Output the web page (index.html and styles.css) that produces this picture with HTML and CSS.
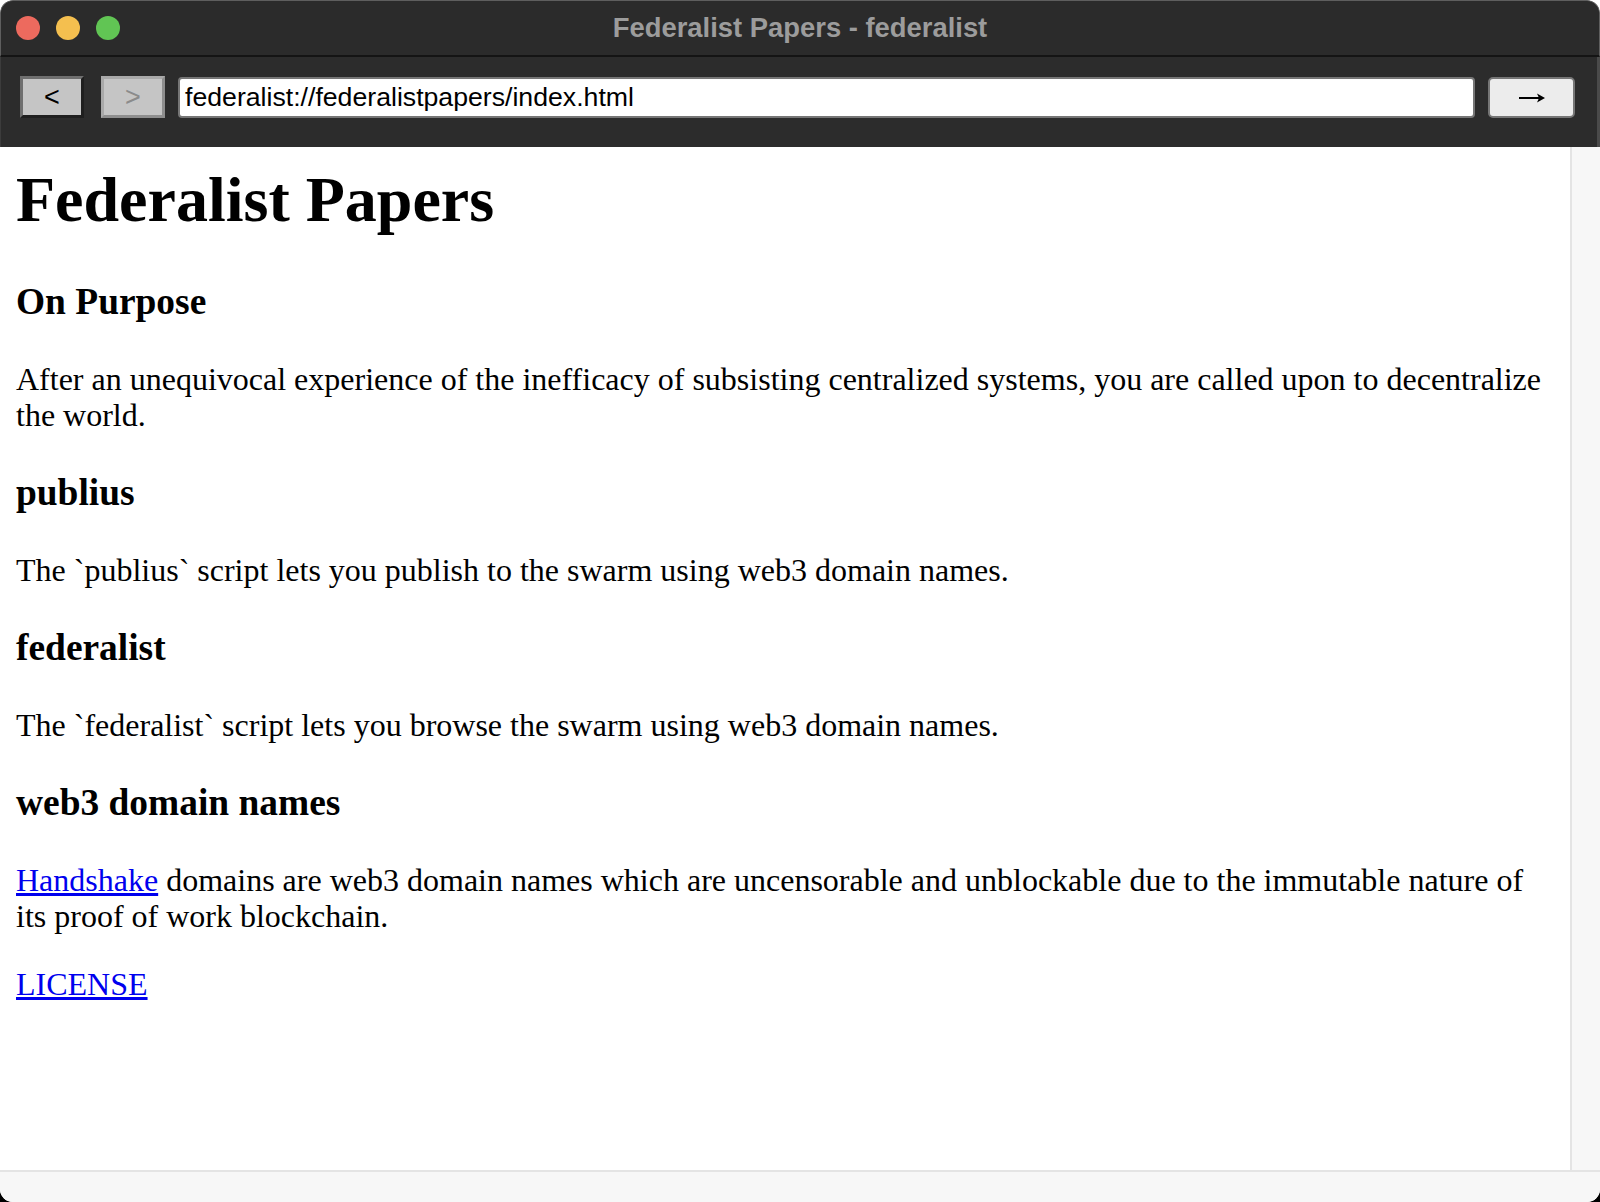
FILE: index.html
```html
<!DOCTYPE html>
<html lang="en">
<head>
<meta charset="utf-8">
<title>Federalist Papers - federalist</title>
<link rel="stylesheet" href="styles.css">
</head>
<body>
<div class="window">
  <div class="titlebar">
    <div class="lights">
      <span class="light red"></span>
      <span class="light yellow"></span>
      <span class="light green"></span>
    </div>
    <div class="title">Federalist Papers - federalist</div>
  </div>
  <div class="toolbar">
    <button class="nav back">&lt;</button>
    <button class="nav fwd" disabled>&gt;</button>
    <div class="url">federalist://federalistpapers/index.html</div>
    <button class="go" aria-label="&rarr;"><svg class="arrow" width="28" height="12" viewBox="0 0 28 12"><path d="M1 6H22" stroke="#000" stroke-width="2" fill="none"/><path d="M19 1.5 L27 6 L19 10.5 L21 6 Z" fill="#000"/></svg></button>
  </div>
  <div class="viewport">
    <div class="page">
      <h1>Federalist Papers</h1>
      <h3>On Purpose</h3>
      <p>After an unequivocal experience of the inefficacy of subsisting centralized systems, you are called upon to decentralize the world.</p>
      <h3>publius</h3>
      <p>The `publius` script lets you publish to the swarm using web3 domain names.</p>
      <h3>federalist</h3>
      <p>The `federalist` script lets you browse the swarm using web3 domain names.</p>
      <h3>web3 domain names</h3>
      <p><a href="#">Handshake</a> domains are web3 domain names which are uncensorable and unblockable due to the immutable nature of its proof of work blockchain.</p>
      <p><a href="#">LICENSE</a></p>
    </div>
    <div class="vscroll"></div>
  </div>
  <div class="hscroll"></div>
</div>
</body>
</html>
```

FILE: styles.css
```css
html {
  background: linear-gradient(#ffffff 0 50%, #000000 50% 100%);
}
body {
  margin: 0;
  width: 1600px;
  height: 1202px;
  overflow: hidden;
}
.window {
  width: 1600px;
  height: 1202px;
  border-radius: 13px;
  overflow: hidden;
  display: flex;
  flex-direction: column;
  background: #ffffff;
}
.titlebar {
  height: 54px;
  flex: none;
  background: #2b2b2b;
  border: 1px solid #5e5e5e;
  border-bottom: 2px solid #141414;
  border-radius: 13px 13px 0 0;
  position: relative;
  display: flex;
  align-items: center;
}
.lights {
  display: flex;
  gap: 16px;
  padding-left: 15px;
}
.light {
  width: 24px;
  height: 24px;
  border-radius: 50%;
  display: block;
}
.red { background: #ed6a5e; }
.yellow { background: #f4bf4f; }
.green { background: #61c554; }
.title {
  position: absolute;
  left: 0;
  right: 0;
  top: 0;
  bottom: 0;
  display: flex;
  align-items: center;
  justify-content: center;
  font-family: "Liberation Sans", Arial, sans-serif;
  font-weight: bold;
  font-size: 27.4px;
  color: #9c9c9c;
}
.toolbar {
  height: 90px;
  flex: none;
  box-sizing: border-box;
  background: #2c2c2c;
  border-left: 1px solid #3c3c3c;
  border-right: 3px solid #4a4a4a;
  display: flex;
  align-items: flex-start;
  padding: 19px 22px 0 19px;
  gap: 13px;
}
.nav {
  width: 64px;
  height: 42px;
  margin: 0;
  padding: 0;
  background: #c5c5c5;
  border: 3px solid;
  font-family: "Liberation Sans", Arial, sans-serif;
  font-size: 27px;
  line-height: 1;
}
.back {
  border-color: #6f6f6f #1f1f1f #1f1f1f #6f6f6f;
  color: #000;
}
.fwd {
  border-color: #a9a9a9 #8e8e8e #8e8e8e #a9a9a9;
  color: #8b8b8b;
  margin-left: 4px;
}
.url {
  flex: 1;
  height: 41px;
  margin-top: 1px;
  box-sizing: border-box;
  background: #fff;
  border: 2px solid #767676;
  border-radius: 4px;
  font-family: "Liberation Sans", Arial, sans-serif;
  font-size: 26.67px;
  color: #000;
  display: flex;
  align-items: center;
  padding-left: 5px;
}
.go {
  width: 87px;
  height: 41px;
  margin: 1px 0 0;
  background: #ececec;
  border: 2px solid #767676;
  border-radius: 5px;
  padding: 0;
  display: flex;
  align-items: center;
  justify-content: center;
}
.arrow {
  display: block;
  margin-top: 1px;
}
.viewport {
  flex: 1;
  display: flex;
  min-height: 0;
}
.page {
  flex: 1;
  padding: 16px 16px 0 16px;
  font-family: "Liberation Serif", "Times New Roman", serif;
  font-size: 32px;
  color: #000;
  overflow: hidden;
}
.page h1 {
  font-size: 64px;
  line-height: 74px;
  margin: 0 0 43px;
}
.page h3 {
  font-size: 37.44px;
  line-height: 43px;
  margin: 38px 0;
}
.page p {
  line-height: 36px;
  margin: 32px 0;
}
.page a {
  color: #0000ee;
}
.vscroll {
  width: 28px;
  flex: none;
  background: #f7f7f7;
  border-left: 2px solid #e4e4e4;
}
.hscroll {
  height: 30px;
  flex: none;
  background: #f7f7f7;
  border-top: 2px solid #e4e4e4;
}
```
